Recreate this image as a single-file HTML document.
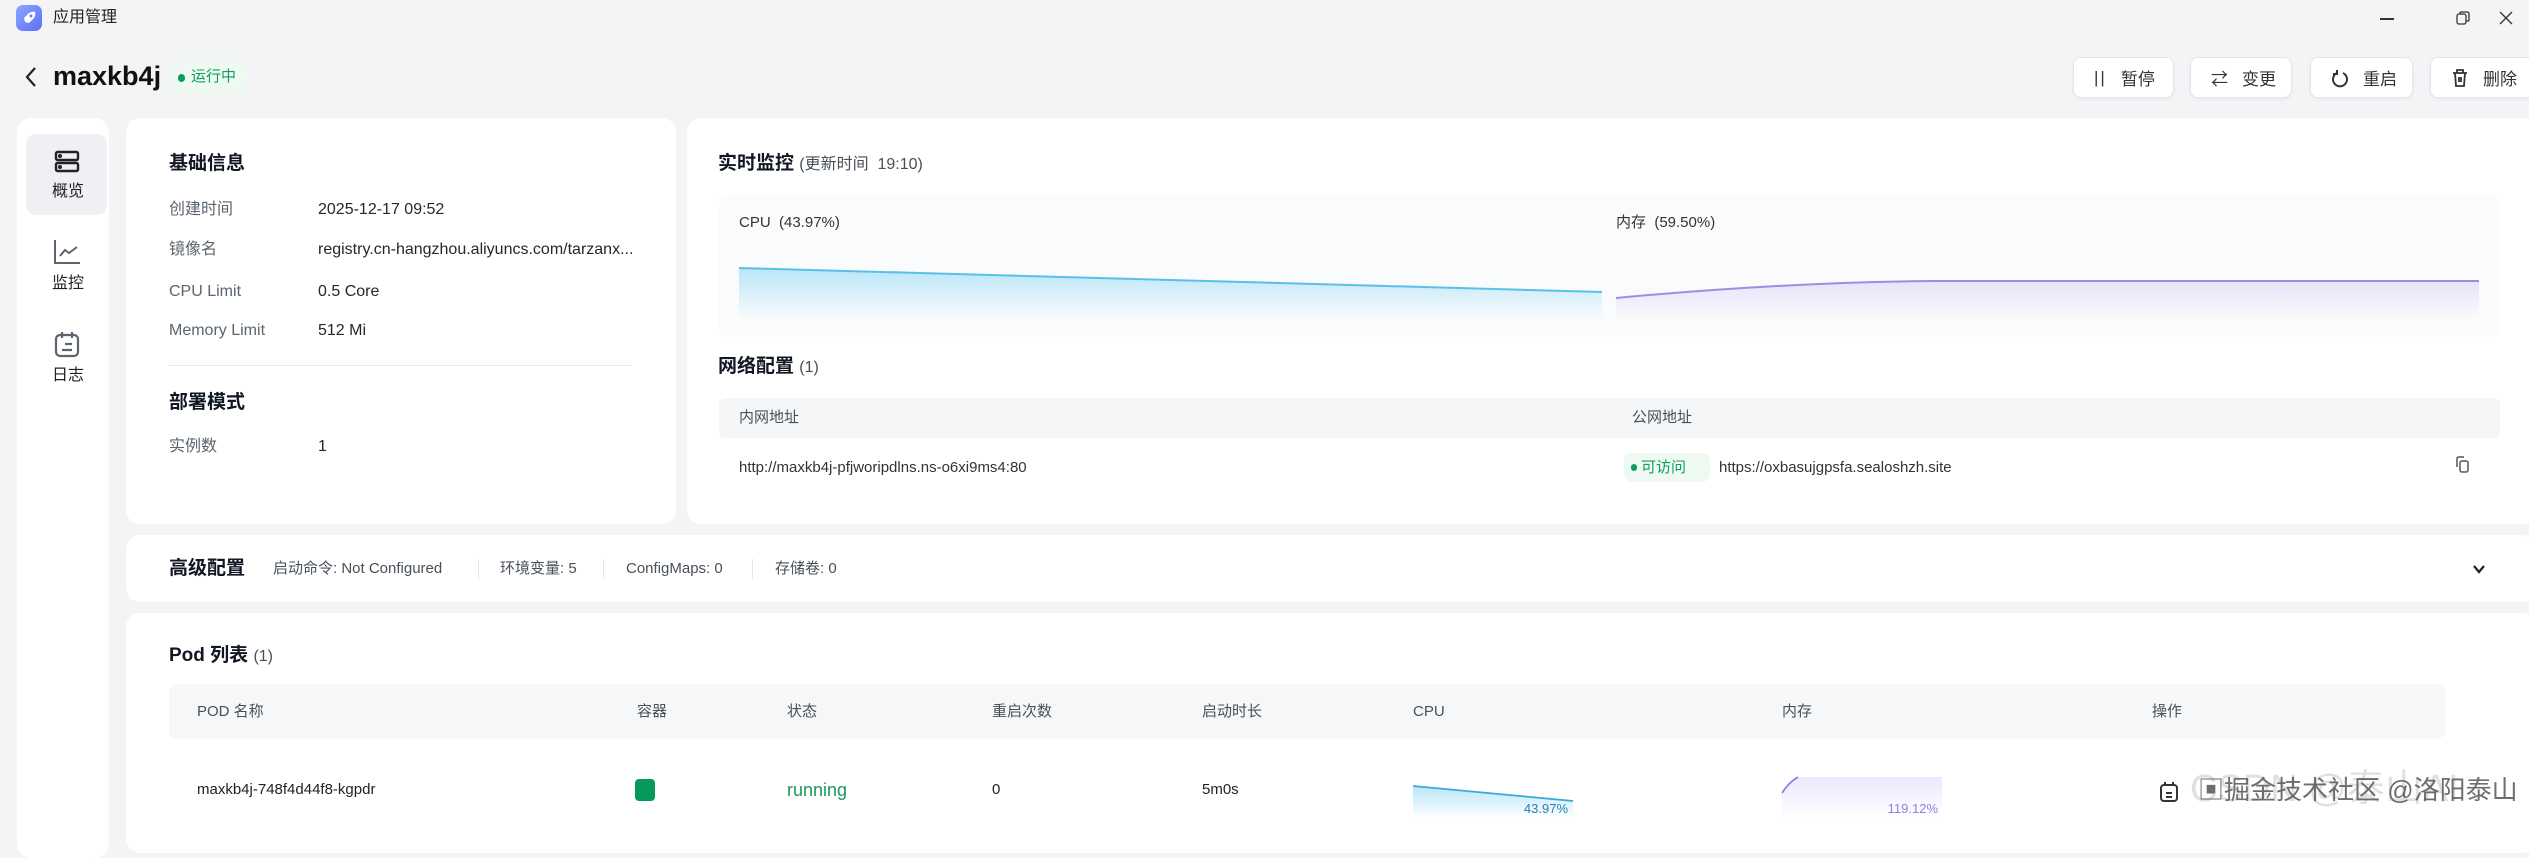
<!DOCTYPE html>
<html><head><meta charset="utf-8">
<style>
*{margin:0;padding:0;box-sizing:border-box}
body{width:2529px;height:831px;overflow:hidden;background:#f3f4f6;font-family:"Liberation Sans","Noto Sans CJK SC",sans-serif;color:#24282c;position:relative}
.a{position:absolute}
.card{position:absolute;background:#fff;border-radius:14px}
.t{position:absolute;white-space:nowrap;line-height:1}
.lbl{color:#5a646e;font-size:16px}
.val{color:#24282c;font-size:16px}
.h{font-size:19px;font-weight:bold;color:#111824}
.sub{font-size:16px;color:#485058;font-weight:normal}
.btn{position:absolute;top:57px;height:41px;background:#fff;border:1px solid #e2e5ea;border-radius:8px;box-shadow:0 2px 3px rgba(0,0,0,.04);font-size:17px;color:#333;display:flex;align-items:center;padding-left:20px;gap:14px}
.th{font-size:15px;color:#485058}
</style></head><body>

<!-- title bar -->
<div class="a" style="left:16px;top:5px;width:26px;height:26px;border-radius:7px;background:linear-gradient(135deg,#8ea6ff,#5b6ef5)"></div>
<svg class="a" style="left:20px;top:9px" width="18" height="18" viewBox="0 0 18 18"><path d="M5 13 L4 9 L9 4 Q13 2 15 3 Q16 5 14 9 L9 14 Z" fill="#fff"/><circle cx="11" cy="7" r="1.5" fill="#6a7df7"/></svg>
<div class="t" style="left:53px;top:10px;font-size:16px;color:#222">应用管理</div>
<div class="a" style="left:2380px;top:18px;width:14px;height:1.5px;background:#333"></div>
<svg class="a" style="left:2455px;top:10px" width="16" height="16" viewBox="0 0 16 16" fill="none" stroke="#333" stroke-width="1.3"><rect x="2" y="4" width="9" height="10" rx="2"/><path d="M5 4 V3 Q5 2 6 2 H12 Q14 2 14 4 V10 Q14 11 13 11 H11"/></svg>
<svg class="a" style="left:2498px;top:10px" width="16" height="16" viewBox="0 0 16 16" stroke="#333" stroke-width="1.3"><path d="M2 2 L14 14 M14 2 L2 14"/></svg>

<!-- header -->
<svg class="a" style="left:24px;top:66px" width="14" height="22" viewBox="0 0 14 22" fill="none" stroke="#222" stroke-width="2.2"><path d="M11 2 L3 11 L11 20"/></svg>
<div class="t" style="left:53px;top:63px;font-size:27px;font-weight:bold;color:#111">maxkb4j</div>
<div class="a" style="left:168px;top:62px;width:82px;height:32px;border-radius:16px;background:#eef9f2"></div>
<div class="a" style="left:178px;top:74px;width:7px;height:8px;border-radius:4px;background:#0e9f5d"></div>
<div class="t" style="left:191px;top:69px;font-size:15px;color:#0e9f5d">运行中</div>

<div class="btn" style="left:2073px;width:101px"><span style="font-size:17px;letter-spacing:2px">||</span>暂停</div>
<div class="btn" style="left:2190px;width:102px"><span>⇄</span>变更</div>
<div class="btn" style="left:2310px;width:103px"><svg width="18" height="20" viewBox="0 0 18 20" fill="none" stroke="#333" stroke-width="2"><path d="M6 5 A7 7 0 1 0 12 5"/><path d="M6 2 V6 H2" /></svg>重启</div>
<div class="btn" style="left:2430px;width:110px"><svg width="18" height="20" viewBox="0 0 18 20" fill="none" stroke="#333" stroke-width="1.8"><path d="M2 5 H16 M6 5 V2 H12 V5 M4 5 L5 18 H13 L14 5 M8 9 V14 M10 9 V14"/></svg>删除</div>

<!-- sidebar -->
<div class="card" style="left:17px;top:118px;width:92px;height:740px"></div>
<div class="a" style="left:26px;top:134px;width:81px;height:81px;border-radius:10px;background:#eff0f3"></div>
<svg class="a" style="left:54px;top:150px" width="26" height="24" viewBox="0 0 26 24" fill="none" stroke="#222" stroke-width="2.4"><rect x="2" y="2" width="22" height="8" rx="1.5"/><rect x="2" y="13" width="22" height="8" rx="1.5"/><circle cx="6" cy="6" r=".8" fill="#222"/><circle cx="6" cy="17" r=".8" fill="#222"/></svg>
<div class="t" style="left:52px;top:184px;font-size:16px;color:#222">概览</div>
<svg class="a" style="left:53px;top:239px" width="28" height="26" viewBox="0 0 28 26" fill="none" stroke="#5d6470" stroke-width="2"><path d="M2 1 V24 H27"/><path d="M7 17 L12 11 L16 14 L24 8"/></svg>
<div class="t" style="left:52px;top:276px;font-size:16px;color:#222">监控</div>
<svg class="a" style="left:54px;top:330px" width="26" height="28" viewBox="0 0 26 28" fill="none" stroke="#5d6470" stroke-width="2.2"><rect x="2" y="5" width="22" height="21" rx="4"/><path d="M8 2 V8 M18 2 V8 M11 14 H18 M8 20 H18"/></svg>
<div class="t" style="left:52px;top:368px;font-size:16px;color:#222">日志</div>

<!-- basic info -->
<div class="card" style="left:126px;top:118px;width:550px;height:406px"></div>
<div class="t h" style="left:169px;top:154px">基础信息</div>
<div class="t lbl" style="left:169px;top:202px">创建时间</div><div class="t val" style="left:318px;top:202px">2025-12-17 09:52</div>
<div class="t lbl" style="left:169px;top:242px">镜像名</div><div class="t val" style="left:318px;top:242px">registry.cn-hangzhou.aliyuncs.com/tarzanx...</div>
<div class="t lbl" style="left:169px;top:284px">CPU Limit</div><div class="t val" style="left:318px;top:284px">0.5 Core</div>
<div class="t lbl" style="left:169px;top:323px">Memory Limit</div><div class="t val" style="left:318px;top:323px">512 Mi</div>
<div class="a" style="left:168px;top:365px;width:464px;height:1px;background:#e8eaed"></div>
<div class="t h" style="left:169px;top:393px">部署模式</div>
<div class="t lbl" style="left:169px;top:439px">实例数</div><div class="t val" style="left:318px;top:439px">1</div>

<!-- monitoring -->
<div class="card" style="left:687px;top:118px;width:1850px;height:406px"></div>
<div class="t h" style="left:718px;top:154px">实时监控 <span class="sub">(更新时间&nbsp; 19:10)</span></div>
<div class="a" style="left:719px;top:195px;width:1781px;height:142px;background:#fafbfc;border-radius:8px"></div>
<div class="t" style="left:739px;top:215px;font-size:15px;color:#333">CPU&nbsp; (43.97%)</div>
<div class="t" style="left:1616px;top:215px;font-size:15px;color:#333">内存&nbsp; (59.50%)</div>
<svg class="a" style="left:739px;top:260px" width="1760" height="60">
<defs><linearGradient id="g1" x1="0" y1="0" x2="0" y2="1"><stop offset="0" stop-color="#b8e6f8"/><stop offset="1" stop-color="#fafbfc"/></linearGradient>
<linearGradient id="g2" x1="0" y1="0" x2="0" y2="1"><stop offset="0" stop-color="#e6e3fb"/><stop offset="1" stop-color="#fafbfc"/></linearGradient></defs>
<path d="M0 8 L863 32 V60 H0 Z" fill="url(#g1)"/><path d="M0 8 L863 32" stroke="#5cbfe6" stroke-width="2"/>
<path d="M877 38 Q1050 22 1196 21 L1740 21 V60 H877 Z" fill="url(#g2)"/><path d="M877 38 Q1050 22 1196 21 L1740 21" stroke="#9d8fe0" stroke-width="2" fill="none"/>
</svg>
<div class="t h" style="left:718px;top:357px">网络配置 <span class="sub">(1)</span></div>
<div class="a" style="left:719px;top:398px;width:1781px;height:40px;background:#f5f6f8;border-radius:6px"></div>
<div class="t th" style="left:739px;top:410px">内网地址</div>
<div class="t th" style="left:1632px;top:410px">公网地址</div>
<div class="t" style="left:739px;top:460px;font-size:15px;color:#333">http://maxkb4j-pfjworipdlns.ns-o6xi9ms4:80</div>
<div class="a" style="left:1624px;top:453px;width:86px;height:29px;border-radius:8px;background:#eef9f2"></div>
<div class="a" style="left:1631px;top:464px;width:6px;height:7px;border-radius:3px;background:#0e9f5d"></div>
<div class="t" style="left:1641px;top:460px;font-size:15px;color:#0e9f5d">可访问</div>
<div class="t" style="left:1719px;top:460px;font-size:15px;color:#333">https://oxbasujgpsfa.sealoshzh.site</div>
<svg class="a" style="left:2455px;top:456px" width="16" height="18" viewBox="0 0 16 18" fill="none" stroke="#555" stroke-width="1.5"><rect x="5" y="5" width="8" height="11" rx="2"/><path d="M2 11 V3 Q2 1 4 1 H9"/></svg>

<!-- advanced -->
<div class="card" style="left:126px;top:535px;width:2410px;height:67px"></div>
<div class="t h" style="left:169px;top:559px">高级配置</div>
<div class="t" style="left:273px;top:561px;font-size:15px;color:#485058">启动命令: Not Configured</div>
<div class="a" style="left:478px;top:559px;width:1px;height:20px;background:#e2e5ea"></div>
<div class="t" style="left:500px;top:561px;font-size:15px;color:#485058">环境变量: 5</div>
<div class="a" style="left:603px;top:559px;width:1px;height:20px;background:#e2e5ea"></div>
<div class="t" style="left:626px;top:561px;font-size:15px;color:#485058">ConfigMaps: 0</div>
<div class="a" style="left:752px;top:559px;width:1px;height:20px;background:#e2e5ea"></div>
<div class="t" style="left:775px;top:561px;font-size:15px;color:#485058">存储卷: 0</div>
<svg class="a" style="left:2472px;top:564px" width="14" height="10" viewBox="0 0 14 10" fill="none" stroke="#222" stroke-width="2.2"><path d="M2 2 L7 8 L12 2"/></svg>

<!-- pods -->
<div class="card" style="left:126px;top:613px;width:2410px;height:240px"></div>
<div class="t h" style="left:169px;top:646px">Pod 列表 <span class="sub">(1)</span></div>
<div class="a" style="left:169px;top:684px;width:2276px;height:55px;background:#f6f7f9;border-radius:8px"></div>
<div class="t th" style="left:197px;top:704px">POD 名称</div>
<div class="t th" style="left:637px;top:704px">容器</div>
<div class="t th" style="left:787px;top:704px">状态</div>
<div class="t th" style="left:992px;top:704px">重启次数</div>
<div class="t th" style="left:1202px;top:704px">启动时长</div>
<div class="t th" style="left:1413px;top:704px">CPU</div>
<div class="t th" style="left:1782px;top:704px">内存</div>
<div class="t th" style="left:2152px;top:704px">操作</div>
<div class="t" style="left:197px;top:782px;font-size:15px;color:#222">maxkb4j-748f4d44f8-kgpdr</div>
<div class="a" style="left:635px;top:779px;width:20px;height:22px;border-radius:4px;background:#059a5c"></div>
<div class="t" style="left:787px;top:781px;font-size:18px;color:#1a9a5a">running</div>
<div class="t" style="left:992px;top:782px;font-size:15px;color:#222">0</div>
<div class="t" style="left:1202px;top:782px;font-size:15px;color:#222">5m0s</div>
<svg class="a" style="left:1413px;top:772px" width="540" height="50">
<defs><linearGradient id="g3" x1="0" y1="0" x2="0" y2="1"><stop offset="0" stop-color="#b8e6f8"/><stop offset="1" stop-color="#fff"/></linearGradient>
<linearGradient id="g4" x1="0" y1="0" x2="0" y2="1"><stop offset="0" stop-color="#ebe8fc"/><stop offset="1" stop-color="#fff"/></linearGradient></defs>
<path d="M0 14 L160 29 V46 H0Z" fill="url(#g3)"/><path d="M0 14 L160 29" stroke="#3aa9d8" stroke-width="1.8"/>
<text x="155" y="41" text-anchor="end" font-size="13" fill="#2a7fae" font-family="Liberation Sans">43.97%</text>
<path d="M369 21 Q380 8 385 5 H529 V46 H369Z" fill="url(#g4)"/><path d="M369 21 Q376 10 385 5" stroke="#8f7fe0" stroke-width="1.8" fill="none"/>
<text x="525" y="41" text-anchor="end" font-size="13" fill="#8f7fe0" font-family="Liberation Sans">119.12%</text>
</svg>
<svg class="a" style="left:2159px;top:781px" width="20" height="22" viewBox="0 0 20 22" fill="none" stroke="#333" stroke-width="2"><rect x="2" y="4" width="16" height="16" rx="3"/><path d="M6 1 V5 M14 1 V5 M7 12 H13 M7 16 H13"/></svg>
<div class="t" style="left:2190px;top:770px;font-size:38px;color:#bbb;opacity:.45">CSDN @泰山AI</div>
<div class="t" style="left:2198px;top:777px;font-size:26px;color:#555;opacity:.85">▣掘金技术社区 @洛阳泰山</div>
</body></html>
